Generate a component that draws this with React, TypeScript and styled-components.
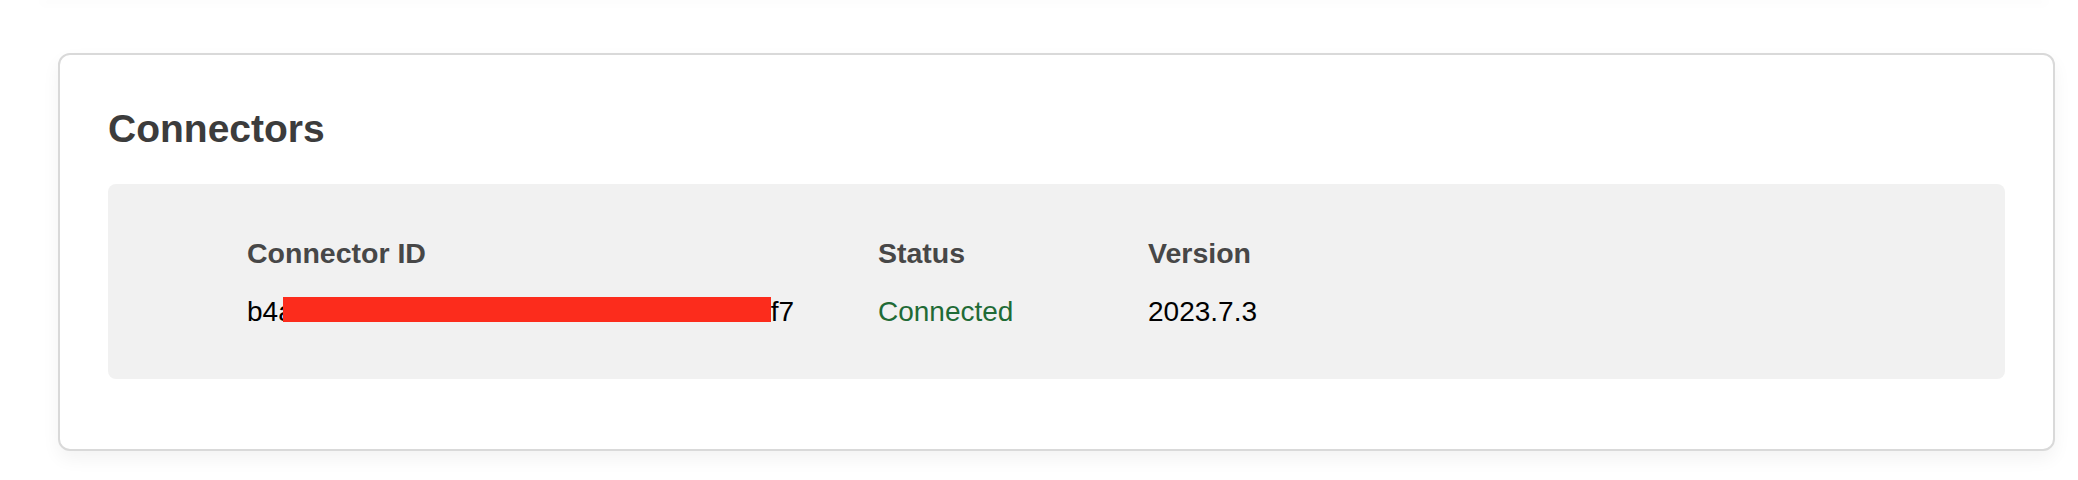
import styled, { createGlobalStyle } from "styled-components";

const GlobalStyle = createGlobalStyle`
  html, body {
    margin: 0;
    padding: 0;
    background: #ffffff;
    font-family: "Liberation Sans", Arial, sans-serif;
  }
`

const connectors = [
  { head: 'b4a', tail: 'f7', status: 'Connected', version: '2023.7.3' },
]

const App = () => {
  return (
    <Page>
      <GlobalStyle />
      <TopEdge />
      <Card>
        <Title>Connectors</Title>
        <TableBox>
          <HeadCell>Connector ID</HeadCell>
          <HeadCell>Status</HeadCell>
          <HeadCell>Version</HeadCell>
          {connectors.map((c) => (
            <Row key={c.head + c.tail}>
              <Cell>
                {c.head}
                <Redacted />
                {c.tail}
              </Cell>
              <Cell $tone="ok">{c.status}</Cell>
              <Cell>{c.version}</Cell>
            </Row>
          ))}
        </TableBox>
      </Card>
    </Page>
  )
};

export default App

const Page = styled.div`
  position: relative;
  width: 2078px;
  height: 480px;
  box-sizing: border-box;
  padding: 53px 23px 0 58px;
  overflow: hidden;
`

const TopEdge = styled.div`
  position: absolute;
  left: 40px;
  right: 30px;
  top: -2px;
  height: 2px;
  box-shadow: 0 3px 10px rgba(0, 0, 0, 0.05);
`

const Card = styled.section`
  box-sizing: border-box;
  height: 398px;
  border: 2px solid #d9d9d9;
  border-radius: 12px;
  background: #ffffff;
  padding: 50px 48px 0 48px;
  box-shadow: 0 8px 18px rgba(0, 0, 0, 0.05);
`

const Title = styled.h2`
  margin: 0 0 31px 0;
  font-size: 39px;
  line-height: 48px;
  font-weight: 700;
  color: #3c3c3c;
`

const TableBox = styled.div`
  display: grid;
  grid-template-columns: 631px 270px auto;
  row-gap: 24px;
  background: #f1f1f1;
  border-radius: 8px;
  padding: 53px 0 51px 139px;
`

const Row = styled.div`
  display: contents;
`

const HeadCell = styled.div`
  font-size: 28.5px;
  line-height: 33.6px;
  font-weight: 700;
  color: #474747;
`

const Cell = styled.div<{ $tone?: 'ok' }>`
  font-size: 28px;
  line-height: 33.6px;
  font-weight: 400;
  color: ${(p) => (p.$tone === 'ok' ? '#1f6b36' : '#000000')};
  white-space: nowrap;
`

const Redacted = styled.span`
  display: inline-block;
  width: 488px;
  height: 25px;
  margin-left: -11px;
  vertical-align: -1px;
  background: #fc2c1c;
`
